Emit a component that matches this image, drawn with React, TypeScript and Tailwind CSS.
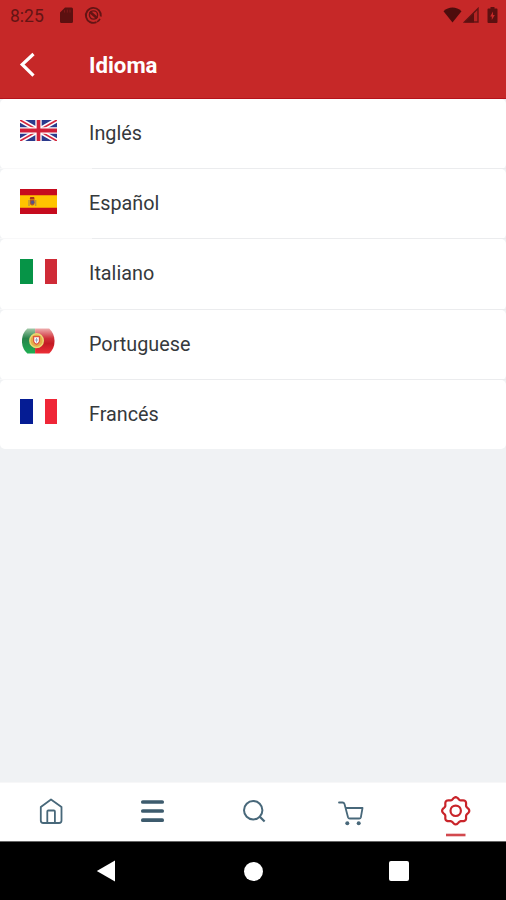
import React from 'react';

function StatusBar() {
  return (
    <div className="flex h-[31px] items-start pl-[10px] pr-[8px] text-[#641414]">
      <span className="mt-[5px] w-[36px] whitespace-nowrap text-[17.5px] leading-[22px]">8:25</span>
      <svg className="ml-[13px] mt-[7px]" width="15" height="17" viewBox="0 0 15 17" fill="none">
        <path d="M6 .5h6.500A1.500 1.500 0 0 1 14 2v12.500a1.500 1.500 0 0 1-1.500 1.500h-10A1.500 1.500 0 0 1 1 14.500V5.500z" fill="#5c1010" />
        <path d="M5.500 3.200v2.400M8.300 2.600v3M11 2.600v3" stroke="#7c1919" strokeWidth="1" />
      </svg>
      <svg className="ml-[10px] mt-[6px]" width="19" height="19" viewBox="0 0 19 19" fill="none" stroke="#641414">
        <path d="M12.500 16.200A7.500 7.500 0 1 1 16.800 10.500" strokeWidth="1.900" />
        <circle cx="9.500" cy="9" r="4.100" strokeWidth="1.400" />
        <path d="M5.800 5.800l7.400 6.400" strokeWidth="2.600" />
        <path d="M13 15.800q2-1 3-3" strokeWidth="1.500" />
      </svg>
      <svg className="ml-auto mt-[7px]" width="19" height="16" viewBox="0 0 19 16" fill="#4d0d0d">
        <path d="M.5 4.200C5.500-.8 13.500-.8 18.500 4.200L9.500 15.500z" />
      </svg>
      <svg className="ml-[1px] mt-[7px]" width="17" height="17" viewBox="0 0 17 17">
        <path d="M1.500 15L15 1.500V15z" fill="#b52424" stroke="#641414" strokeWidth="1.400" />
        <path d="M1.500 15.500L11 6v9.500z" fill="#5c1010" />
      </svg>
      <svg className="ml-[7px] mt-[7px]" width="11" height="17" viewBox="0 0 11 17">
        <path d="M3.500 0h4v1.500h2a1 1 0 0 1 1 1V15a1 1 0 0 1-1 1h-8a1 1 0 0 1-1-1V2.500a1 1 0 0 1 1-1h2z" fill="#5c1010" />
        <path d="M6 4.500L3.200 9.500h1.600v3.500l3-5H6z" fill="#c62828" />
      </svg>
    </div>
  );
}

function FlagUK() {
  return (
    <svg width="37" height="21" viewBox="0 0 38 21" preserveAspectRatio="none">
      <path d="M0 0h38v21H0z" fill="#2b3a8c" />
      <path d="M0 0l38 21M38 0L0 21" stroke="#fff" strokeWidth="5" />
      <path d="M0 0l19 10.500M38 21L19 10.500M38 0L19 10.500M0 21l19-10.500" stroke="#d5283f" strokeWidth="1.700" />
      <path d="M19 0v21M0 10.500h38" stroke="#fff" strokeWidth="6.500" />
      <path d="M19 0v21M0 10.500h38" stroke="#d01f38" strokeWidth="3.800" />
    </svg>
  );
}

function FlagSpain() {
  return (
    <svg width="37" height="25" viewBox="0 0 38 25" preserveAspectRatio="none">
      <path d="M0 0h38v25H0z" fill="#c60b1e" />
      <path d="M0 6.200h38v12.600H0z" fill="#ffc400" />
      <path d="M8.500 11h1.500v6H8.500zM15.300 11h1.500v6h-1.500z" fill="#b9963f" />
      <path d="M10.300 10.500h4.600v4.500q-2.200 3-4.600 0z" fill="#ad5530" />
      <path d="M10.500 8h4l.5 2.200h-5z" fill="#a8331f" />
      <circle cx="13" cy="13.300" r="1.800" fill="#53548a" />
    </svg>
  );
}

function FlagPortugal() {
  return (
    <svg width="37" height="26" viewBox="0 0 38 26" preserveAspectRatio="none">
      <defs>
        <clipPath id="pt-clip">
          <path d="M7.500 .5h22.500q5.500 5 5.500 12.500T30 25.500H7.500Q2 20.500 2 13T7.500 .5z" />
        </clipPath>
        <linearGradient id="pt-green" x1="0" y1="0" x2="0" y2="1">
          <stop offset="0" stopColor="#a8cdae" />
          <stop offset=".4" stopColor="#27834a" />
          <stop offset="1" stopColor="#1fb052" />
        </linearGradient>
        <linearGradient id="pt-red" x1="0" y1="0" x2="0" y2="1">
          <stop offset="0" stopColor="#f0b4b4" />
          <stop offset=".4" stopColor="#cf3038" />
          <stop offset=".6" stopColor="#c31a24" />
          <stop offset="1" stopColor="#ef3038" />
        </linearGradient>
      </defs>
      <g clipPath="url(#pt-clip)">
        <path d="M0 0h15.500v26H0z" fill="url(#pt-green)" />
        <path d="M15.500 0H38v26H15.500z" fill="url(#pt-red)" />
      </g>
      <circle cx="17" cy="12.700" r="6.900" fill="#e2ae48" stroke="#ecd874" strokeWidth="1.500" />
      <path d="M14 8.700h6V13.500q-3 5.500-6 0z" fill="#fff" stroke="#e0583e" strokeWidth="1.300" />
      <path d="M17 10v4.500M15.500 12h3" stroke="#8b9cc0" strokeWidth=".9" />
    </svg>
  );
}

function FlagItaly() {
  return (
    <div className="flex h-[25px] w-[37px]">
      <div className="w-[12.500px] bg-[#069447]" />
      <div className="w-[12px] bg-white" />
      <div className="flex-1 bg-[#cf2b37]" />
    </div>
  );
}

function FlagFrance() {
  return (
    <div className="flex h-[25px] w-[37px]">
      <div className="w-[12.500px] bg-[#051c94]" />
      <div className="w-[12px] bg-white" />
      <div className="flex-1 bg-[#ef2637]" />
    </div>
  );
}

const languages = [
  { name: 'Inglés', flag: <FlagUK /> },
  { name: 'Español', flag: <FlagSpain /> },
  { name: 'Italiano', flag: <FlagItaly /> },
  { name: 'Portuguese', flag: <FlagPortugal /> },
  { name: 'Francés', flag: <FlagFrance /> },
];

// Eight-lobed outline of the settings icon
const gearPoints = Array.from({ length: 97 }, (_, i) => {
  const a = (i / 96) * Math.PI * 2;
  const r = 12.5 + 1.1 * Math.cos(8 * a);
  return `${(20.7 + r * Math.sin(a)).toFixed(2)},${(27.8 - r * Math.cos(a)).toFixed(2)}`;
}).join(' ');

function BottomNav() {
  return (
    <nav className="grid h-[60px] grid-cols-5 justify-items-center border-b border-t border-b-[#666] border-t-[#f7f7f8] bg-white text-[#48687a]">
      <svg width="40" height="57" viewBox="0 0 40 57" fill="none" stroke="currentColor" strokeWidth="1.800" strokeLinejoin="round">
        <path d="M9.800 24L20 16.500 30.500 24v13.500a2.500 2.500 0 0 1-2.500 2.500H12.300a2.500 2.500 0 0 1-2.500-2.500z" />
        <path d="M16.300 39.500V28.500a1 1 0 0 1 1-1h5.600a1 1 0 0 1 1 1v11" />
      </svg>
      <svg width="40" height="57" viewBox="0 0 40 57" fill="none" stroke="#3d5b6d" strokeWidth="3.700" strokeLinecap="round">
        <path d="M10.800 19h19.400M10.800 28h19.400M10.800 37.200h19.400" />
      </svg>
      <svg width="40" height="57" viewBox="0 0 40 57" fill="none" stroke="currentColor" strokeWidth="2">
        <circle cx="20.200" cy="27.200" r="9.200" />
        <path d="M26.800 33.800l4.800 4.700" strokeWidth="2.300" />
      </svg>
      <svg width="40" height="57" viewBox="0 0 40 57" fill="none" stroke="currentColor" strokeWidth="1.800" strokeLinecap="round" strokeLinejoin="round">
        <path d="M5 19.500h3.500q1.500 0 2 1.500l3.500 13.200q.4 1.300 1.800 1.300h9.400q1.300 0 1.700-1.300l1.600-9.200H11.500" />
        <circle cx="13.300" cy="40.200" r="2" fill="currentColor" stroke="none" />
        <circle cx="24.700" cy="40.200" r="2" fill="currentColor" stroke="none" />
      </svg>
      <svg width="40" height="57" viewBox="0 0 40 57" fill="none" stroke="#c9242a" strokeWidth="2.200">
        <polygon points={gearPoints} strokeLinejoin="round" />
        <circle cx="20.700" cy="27.800" r="5.200" />
        <path d="M11 52h19.500" stroke="#d2494e" strokeWidth="2.600" />
      </svg>
    </nav>
  );
}

export default function App() {
  return (
    <div className="flex h-[900px] w-[506px] flex-col overflow-hidden bg-[#f0f2f4] font-['Roboto',sans-serif]">
      <header className="h-[99px] border-b border-[#b5121b] bg-[#c62828]">
        <StatusBar />
        <div className="flex h-[67px] items-center">
          <svg className="ml-[18px]" width="20" height="28" viewBox="0 0 20 28" fill="none" stroke="#fff" strokeWidth="3.200">
            <path d="M15.500 3L4.200 13.500 15.500 24.700" />
          </svg>
          <h1 className="ml-[51px] text-[22.200px] font-bold leading-7 text-white">Idioma</h1>
        </div>
      </header>

      <main className="flex-1">
        {languages.map((lang, i) => (
          <div key={lang.name} className="flex h-[70.200px] flex-col rounded-[5px] bg-white last:h-[69px]">
            <div className="flex flex-1 items-center">
              <div className="mb-[5.400px] ml-[20px] w-[69px]">{lang.flag}</div>
              <span className="mt-[1px] text-[19.800px] leading-7 text-[#35393c]">{lang.name}</span>
            </div>
            {i < languages.length - 1 && (
              <div className="flex h-[1px]">
                <div className="w-[92px] bg-[#f8f8f9]" />
                <div className="flex-1 bg-[#ebecee]" />
              </div>
            )}
          </div>
        ))}
      </main>

      <BottomNav />

      <div className="flex h-[58px] items-center bg-black">
        <svg className="ml-[96px]" width="20" height="22" viewBox="0 0 20 22">
          <path d="M.8 11L19 .5v21z" fill="#fff" />
        </svg>
        <div className="ml-[128px] size-[19px] rounded-full bg-white" />
        <div className="ml-[126px] size-[20px] rounded-[2px] bg-white" />
      </div>
    </div>
  );
}
